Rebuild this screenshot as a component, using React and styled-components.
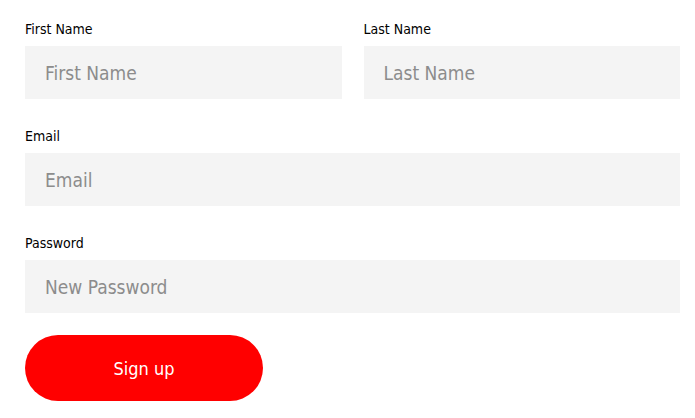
import styled, { createGlobalStyle } from "styled-components";

const GlobalStyle = createGlobalStyle`
  body {
    margin: 0;
    background: #ffffff;
    font-family: "DejaVu Sans Condensed", "Liberation Sans Narrow", "Liberation Sans", sans-serif;
  }
  * {
    box-sizing: border-box;
  }
`;

function Field({ label, placeholder, type = "text" }) {
  return (
    <Group>
      <Label>{label}</Label>
      <Input type={type} placeholder={placeholder} />
    </Group>
  );
}

function App() {
  return (
    <>
      <GlobalStyle />
      <Form onSubmit={(e) => e.preventDefault()}>
        <Fields>
          <Row>
            <Field label="First Name" placeholder="First Name" />
            <Field label="Last Name" placeholder="Last Name" />
          </Row>
          <Field label="Email" placeholder="Email" type="email" />
          <Field label="Password" placeholder="New Password" type="password" />
        </Fields>
        <Button type="submit">Sign up</Button>
      </Form>
    </>
  );
}

const Form = styled.form`
  display: flex;
  flex-direction: column;
  align-items: flex-start;
  padding: 19px 15px 0 25px;
`;

const Fields = styled.div`
  display: flex;
  flex-direction: column;
  gap: 27px;
  width: 100%;
`;

const Row = styled.div`
  display: grid;
  grid-template-columns: 1fr 1fr;
  gap: 22px;
`;

const Group = styled.div`
  display: flex;
  flex-direction: column;
`;

const Label = styled.label`
  font-size: 14px;
  line-height: 20px;
  color: #000;
  margin-bottom: 7px;
`;

const Input = styled.input`
  height: 53px;
  width: 100%;
  border: none;
  outline: none;
  background: #f4f4f4;
  padding: 0 20px;
  font-family: inherit;
  font-size: 19px;
  color: #333;
  &::placeholder {
    color: #8c8c8c;
  }
`;

const Button = styled.button`
  margin-top: 22px;
  width: 238px;
  height: 66px;
  border: none;
  border-radius: 33px;
  background: #ff0000;
  color: #ffffff;
  font-family: inherit;
  font-size: 18px;
  cursor: pointer;
`;

export default App;
